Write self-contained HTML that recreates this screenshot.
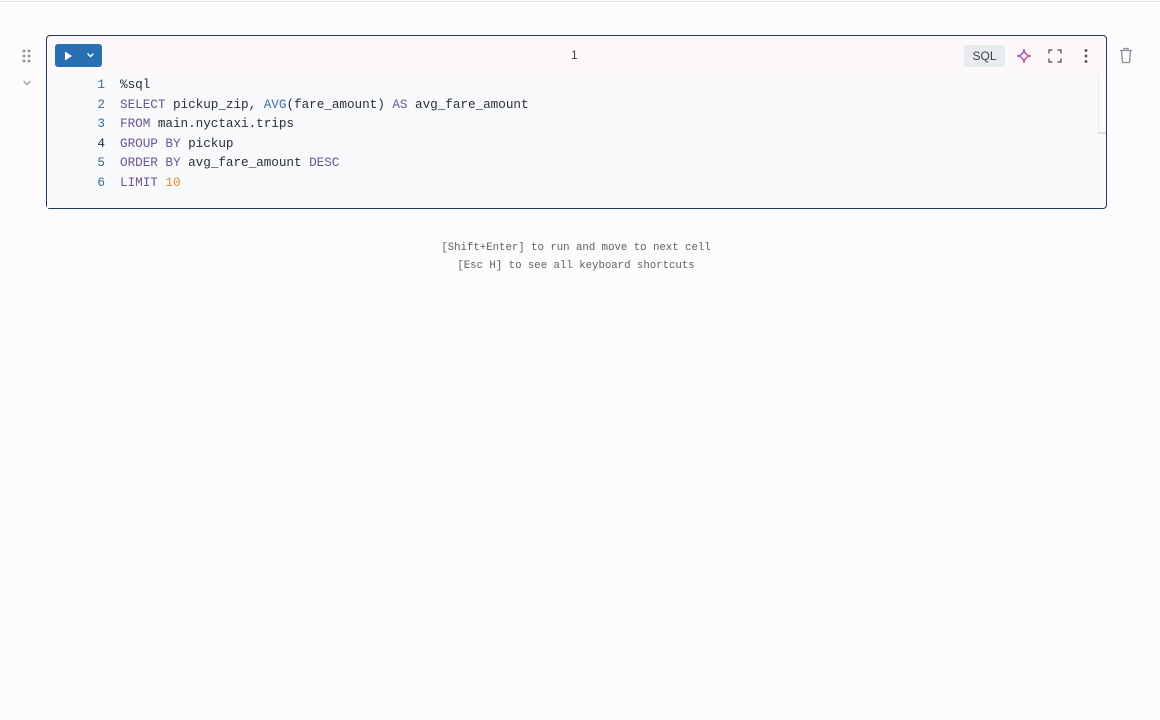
<!DOCTYPE html>
<html><head><meta charset="utf-8"><style>
*{margin:0;padding:0;box-sizing:border-box}
body{width:1160px;height:720px;background:#fcfcfd;position:relative;overflow:hidden;font-family:"Liberation Sans",sans-serif}
.top{position:absolute;left:0;top:0;width:1160px;height:2px;border-bottom:1px solid #e3e5e8}
.cell{position:absolute;left:46px;top:35px;width:1061px;height:174px;border:1px solid #1f3a5c;border-radius:4px;background:#fdf9fb}
.code{position:absolute;left:0;top:38px;width:1051px;height:134px;background:#f7f9fb}
.run{position:absolute;left:8px;top:8px;width:47px;height:23px;background:#2a6fb3;border-radius:3px}
.ln{position:absolute;left:50px;width:8px;text-align:right;font:12.7px "Liberation Mono",monospace;color:#3d6c93}
.cl{position:absolute;left:73px;font:12.7px "Liberation Mono",monospace;color:#2b2f36;white-space:pre;letter-spacing:-0.05px}
.k{color:#6e5494}.f{color:#3a6fa8}.n{color:#e08a2b}
.hint{position:absolute;left:0;width:1152px;text-align:center;font:10.7px "Liberation Mono",monospace;color:#5c6169}
</style></head><body>
<div class="top"></div>
<svg style="position:absolute;left:22px;top:49px" width="10" height="14"><g fill="#8a9099"><circle cx="2" cy="2" r="1.4"/><circle cx="7" cy="2" r="1.4"/><circle cx="2" cy="7" r="1.4"/><circle cx="7" cy="7" r="1.4"/><circle cx="2" cy="12" r="1.4"/><circle cx="7" cy="12" r="1.4"/></g></svg>
<svg style="position:absolute;left:22px;top:79px" width="10" height="8"><path d="M1.5 2l3.5 3.5L8.5 2" fill="none" stroke="#8a9099" stroke-width="1.2"/></svg>
<div class="cell">
 <div class="code"></div>
 <div style="position:absolute;left:1051px;top:38px;width:8px;height:60px;border-left:1px solid #e8eaed;border-bottom:2px solid #dadde2"></div>
 <div class="run">
  <svg style="position:absolute;left:9px;top:7px" width="9" height="10"><path d="M1 0.5L8 5L1 9.5Z" fill="#fff"/></svg>
  <svg style="position:absolute;left:31px;top:8px" width="9" height="7"><path d="M1.5 1.5l3 3 3-3" fill="none" stroke="#fff" stroke-width="1.4"/></svg>
 </div>
 <div style="position:absolute;left:524px;top:12px;font-size:12px;color:#3b3f45">1</div>
 <div style="position:absolute;left:917px;top:9px;width:41px;height:22px;background:#e9ecef;border-radius:3px;font-size:12px;color:#3b3f45;text-align:center;line-height:22px">SQL</div>
 <svg style="position:absolute;left:969px;top:12px" width="16" height="16"><defs><linearGradient id="g" x1="0" y1="0" x2="1" y2="1"><stop offset="0" stop-color="#7a5ad8"/><stop offset="1" stop-color="#e0437a"/></linearGradient></defs><path d="M8 1.5Q8.8 7.2 14.5 8Q8.8 8.8 8 14.5Q7.2 8.8 1.5 8Q7.2 7.2 8 1.5Z" fill="none" stroke="url(#g)" stroke-width="1.3" stroke-linejoin="round"/></svg>
 <svg style="position:absolute;left:1001px;top:13px" width="14" height="14"><path d="M1 4.5V1h3.5M9.5 1H13v3.5M13 9.5V13H9.5M4.5 13H1V9.5" fill="none" stroke="#4b5058" stroke-width="1.3"/></svg>
 <svg style="position:absolute;left:1036px;top:12px" width="6" height="16"><g fill="#4b5058"><circle cx="3" cy="2.5" r="1.4"/><circle cx="3" cy="8" r="1.4"/><circle cx="3" cy="13.5" r="1.4"/></g></svg>
 <div class="ln" style="top:41px">1</div><div class="cl" style="top:41px">%sql</div>
 <div class="ln" style="top:60.5px">2</div><div class="cl" style="top:60.5px"><span class="k">SELECT</span> pickup_zip, <span class="f">AVG</span>(fare_amount) <span class="k">AS</span> avg_fare_amount</div>
 <div class="ln" style="top:80px">3</div><div class="cl" style="top:80px"><span class="k">FROM</span> main.nyctaxi.trips</div>
 <div class="ln" style="top:99.5px;color:#1e2a3a">4</div><div class="cl" style="top:99.5px"><span class="k">GROUP BY</span> pickup</div>
 <div class="ln" style="top:119px">5</div><div class="cl" style="top:119px"><span class="k">ORDER BY</span> avg_fare_amount <span class="k">DESC</span></div>
 <div class="ln" style="top:138.5px">6</div><div class="cl" style="top:138.5px"><span class="k">LIMIT</span> <span class="n">10</span></div>
</div>
<svg style="position:absolute;left:1119px;top:47px" width="14" height="17"><path d="M1 3.5h12M5 3.5V1.5h4v2M2.5 3.5l1 12h7l1-12" fill="none" stroke="#8a9099" stroke-width="1.3" stroke-linejoin="round"/></svg>
<div class="hint" style="top:242px">[Shift+Enter] to run and move to next cell</div>
<div class="hint" style="top:260px">[Esc H] to see all keyboard shortcuts</div>
</body></html>
